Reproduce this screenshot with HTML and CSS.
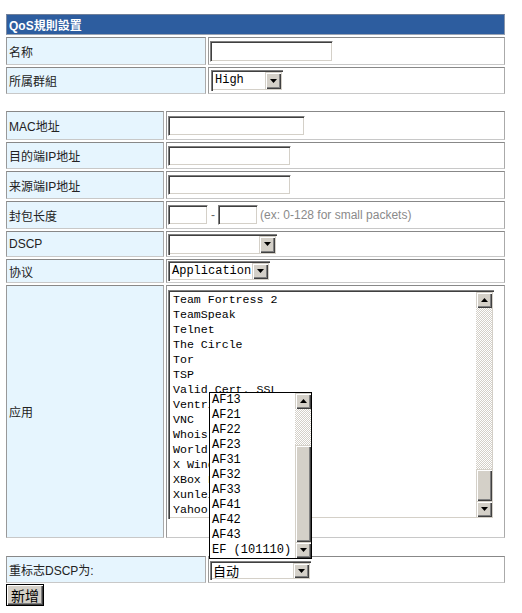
FILE: index.html
```html
<!DOCTYPE html>
<html lang="zh">
<head>
<meta charset="utf-8">
<title>QoS規則設置</title>
<link rel="stylesheet" href="styles.css">
</head>
<body>
<div class="page">
  <div class="grid g1">
    <div class="cell head">QoS規則設置</div>
    <div class="cell lab">名称</div>
    <div class="cell val"><input class="txt w-name" type="text"></div>
    <div class="cell lab">所属群組</div>
    <div class="cell val">
      <div class="combo w-high"><span class="ctext">High</span><span class="cbtn"><svg width="7" height="4" viewBox="0 0 7 4"><polygon points="0,0 7,0 3.5,4"/></svg></span></div>
    </div>
  </div>

  <div class="grid g2">
    <div class="cell lab">MAC地址</div>
    <div class="cell val"><input class="txt w-mac" type="text"></div>
    <div class="cell lab">目的端IP地址</div>
    <div class="cell val"><input class="txt w-ip" type="text"></div>
    <div class="cell lab">来源端IP地址</div>
    <div class="cell val"><input class="txt w-ip" type="text"></div>
    <div class="cell lab">封包长度</div>
    <div class="cell val">
      <input class="txt w-len" type="text"><span class="dash">-</span><input class="txt w-len" type="text"><span class="hint">(ex: 0-128 for small packets)</span>
    </div>
    <div class="cell lab">DSCP</div>
    <div class="cell val">
      <div class="combo w-dscp"><span class="ctext"></span><span class="cbtn"><svg width="7" height="4" viewBox="0 0 7 4"><polygon points="0,0 7,0 3.5,4"/></svg></span></div>
    </div>
    <div class="cell lab">协议</div>
    <div class="cell val">
      <div class="combo w-app"><span class="ctext">Application</span><span class="cbtn"><svg width="7" height="4" viewBox="0 0 7 4"><polygon points="0,0 7,0 3.5,4"/></svg></span></div>
    </div>
    <div class="cell lab">应用</div>
    <div class="cell val top">
      <div class="listbox">
        <div class="items">
          <div class="item">Team Fortress 2</div>
          <div class="item">TeamSpeak</div>
          <div class="item">Telnet</div>
          <div class="item">The Circle</div>
          <div class="item">Tor</div>
          <div class="item">TSP</div>
          <div class="item">Valid Cert. SSL</div>
          <div class="item">Ventrilo</div>
          <div class="item">VNC</div>
          <div class="item">Whois</div>
          <div class="item">World of Warcraft</div>
          <div class="item">X Windows</div>
          <div class="item">XBox Live</div>
          <div class="item">Xunlei</div>
          <div class="item">Yahoo Messenger</div>
        </div>
        <div class="vscroll">
          <span class="sbtn"><svg width="7" height="4" viewBox="0 0 7 4"><polygon points="0,4 7,4 3.5,0"/></svg></span>
          <span class="track t-list"></span>
          <span class="thumb th-list"></span>
          <span class="sbtn"><svg width="7" height="4" viewBox="0 0 7 4"><polygon points="0,0 7,0 3.5,4"/></svg></span>
        </div>
      </div>
    </div>
  </div>

  <div class="grid g3">
    <div class="cell lab">重标志DSCP为:</div>
    <div class="cell val top">
      <div class="combo w-auto"><span class="ctext cjk">自动</span><span class="cbtn"><svg width="7" height="4" viewBox="0 0 7 4"><polygon points="0,0 7,0 3.5,4"/></svg></span>
        <div class="popup">
          <div class="items pitems">
            <div class="item">AF13</div>
            <div class="item">AF21</div>
            <div class="item">AF22</div>
            <div class="item">AF23</div>
            <div class="item">AF31</div>
            <div class="item">AF32</div>
            <div class="item">AF33</div>
            <div class="item">AF41</div>
            <div class="item">AF42</div>
            <div class="item">AF43</div>
            <div class="item">EF (101110)</div>
          </div>
          <div class="vscroll">
            <span class="sbtn"><svg width="7" height="4" viewBox="0 0 7 4"><polygon points="0,4 7,4 3.5,0"/></svg></span>
            <span class="track t-pop"></span>
            <span class="thumb th-pop"></span>
            <span class="sbtn"><svg width="7" height="4" viewBox="0 0 7 4"><polygon points="0,0 7,0 3.5,4"/></svg></span>
          </div>
        </div>
      </div>
    </div>
  </div>

  <button class="btn" type="button">新增</button>
</div>
</body>
</html>
```

FILE: styles.css
```css
html, body {
  margin: 0;
  padding: 0;
  background: #fff;
}
body {
  font-family: "Liberation Sans", "Noto Sans CJK SC", sans-serif;
  font-size: 12px;
  color: #222;
}
.page {
  padding: 12px 0 0 4px;
}
.grid {
  display: grid;
  gap: 2px;
  padding: 2px;
  width: 503px;
  box-sizing: border-box;
}
.g1 {
  grid-template-columns: 200px 297px;
  grid-template-rows: 21px 28px 27px;
}
.g2 {
  margin-top: 13px;
  grid-template-columns: 158px 339px;
  grid-template-rows: 29px 27px 28px 28px 26px 24px 253px;
}
.g3 {
  margin-top: 14px;
  grid-template-columns: 200px 297px;
  grid-template-rows: 27px;
}
.cell {
  box-sizing: border-box;
  border: 1px solid;
  border-color: #888 #aaa #c8c8c8 #999;
  display: flex;
  align-items: center;
  min-width: 0;
}
.head {
  grid-column: 1 / -1;
  background: #2d5d9f;
  color: #fff;
  font-weight: bold;
  padding-left: 2px;
  border-color: #6f7f99 #8a96aa #9aa4b4 #7d8aa0;
}
.lab {
  background: #e6f5fe;
  padding-left: 2px;
  white-space: nowrap;
}
.val {
  background: #fff;
  padding-left: 1px;
}
.val.top {
  align-items: flex-start;
}

/* text inputs */
.txt {
  box-sizing: border-box;
  height: 20px;
  margin: 0;
  padding: 0 2px;
  border: 1px solid;
  border-color: #808080 #fff #fff #808080;
  box-shadow: inset 1px 1px #404040, inset -1px -1px #d4d0c8;
  background: #fff;
  font: 12px "Liberation Mono", monospace;
  outline: none;
}
.w-name { width: 123px; height: 21px; }
.w-mac { width: 137px; }
.w-ip { width: 123px; }
.w-len { width: 40px; }
.dash {
  margin: 0 3px;
  color: #666;
}
.hint {
  margin-left: 2px;
  color: #8a8a8a;
}

/* combo boxes */
.combo {
  position: relative;
  box-sizing: border-box;
  display: flex;
  align-items: stretch;
  padding: 2px;
  border: 0;
  background: #fff;
  box-shadow: inset 1px 1px #808080, inset 2px 2px #404040, inset -1px -1px #fff, inset -2px -2px #d4d0c8;
}
.w-high { width: 72px; height: 21px; margin-left: 1px; }
.w-dscp { width: 109px; height: 21px; }
.w-app { width: 102px; height: 20px; }
.w-auto { width: 101px; height: 19px; margin-top: 4px; }
.ctext {
  flex: 1;
  display: flex;
  align-items: center;
  padding-left: 2px;
  font: 12px/15px "Liberation Mono", monospace;
  color: #000;
  white-space: nowrap;
  overflow: hidden;
}
.ctext.cjk {
  font: 13px/15px "Noto Sans CJK SC", sans-serif;
  padding-left: 1px;
  overflow: visible;
}
.cbtn, .sbtn {
  box-sizing: border-box;
  width: 16px;
  flex: none;
  display: flex;
  align-items: center;
  justify-content: center;
  background: #d4d0c8;
  box-shadow: inset 1px 1px #d4d0c8, inset 2px 2px #fff, inset -1px -1px #404040, inset -2px -2px #808080;
}
.cbtn svg, .sbtn svg {
  fill: #000;
  display: block;
}
.sbtn {
  height: 16px;
}

/* list box */
.listbox {
  box-sizing: border-box;
  width: 326px;
  height: 229px;
  margin-top: 4px;
  padding: 2px;
  display: flex;
  background: #fff;
  box-shadow: inset 1px 1px #808080, inset 2px 2px #404040, inset -1px -1px #fff, inset -2px -2px #d4d0c8;
}
.items {
  flex: 1;
  min-width: 0;
  overflow: hidden;
  padding-left: 3px;
}
.item {
  height: 15px;
  font: 11.6px/15px "Liberation Mono", monospace;
  color: #000;
  white-space: nowrap;
}
.vscroll {
  width: 16px;
  flex: none;
  display: flex;
  flex-direction: column;
}
.track {
  display: block;
  background-image: repeating-conic-gradient(#d4d0c8 0 25%, #fff 0 50%);
  background-size: 2px 2px;
}
.thumb {
  display: block;
  box-sizing: border-box;
  background: #d4d0c8;
  box-shadow: inset 1px 1px #d4d0c8, inset 2px 2px #fff, inset -1px -1px #404040, inset -2px -2px #808080;
}
.t-list { height: 161px; }
.th-list { height: 32px; }

/* dropdown popup (opened upward) */
.popup {
  position: absolute;
  left: -1px;
  bottom: calc(100% + 2px);
  z-index: 10;
  box-sizing: border-box;
  width: 103px;
  height: 167px;
  border: 1px solid #000;
  background: #fff;
  display: flex;
}
.pitems {
  padding-left: 2px;
}
.pitems .item {
  font-size: 12px;
}
.t-pop { height: 36px; }
.th-pop { height: 97px; }

/* button */
.btn {
  display: block;
  margin: -1px 0 0 2px;
  width: 38px;
  height: 22px;
  box-sizing: border-box;
  padding: 0;
  border: 1px solid #000;
  background: #d4d0c8;
  box-shadow: inset 1px 1px #fff, inset -1px -1px #404040, inset -2px -2px #808080;
  font: 14px/18px "Noto Sans CJK SC", sans-serif;
  color: #000;
}
```
